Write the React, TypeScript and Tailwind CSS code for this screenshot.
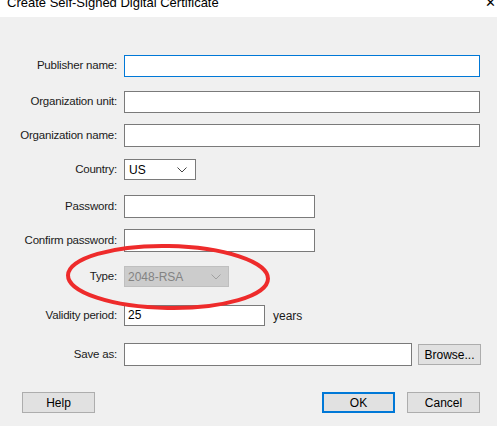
import React from "react";

const font = { fontFamily: '"Liberation Sans", Arial, sans-serif' };

function Chevron({ color }: { color: string }) {
  return (
    <svg width="10" height="6" viewBox="0 0 10 6" fill="none">
      <path d="M0.5 0.5 L5 5 L9.5 0.5" stroke={color} strokeWidth="1" />
    </svg>
  );
}

function Row({
  label,
  mt,
  children,
}: {
  label: string;
  mt: string;
  children: React.ReactNode;
}) {
  return (
    <div className={`flex items-center ${mt}`}>
      <div className="w-[118px] pr-[1px] text-right text-[11.5px] tracking-[-0.2px] text-[#1a1a1a]">{label}</div>
      <div className="ml-[6px] flex items-center">{children}</div>
    </div>
  );
}

export default function App() {
  return (
    <div className="relative w-[497px] h-[426px] overflow-hidden bg-[#f0f0f0]" style={font}>
      {/* title bar */}
      <div className="h-[17px] bg-white relative">
        <div className="absolute left-[7px] top-[-7px] text-[13px] text-black">
          Create Self-Signed Digital Certificate
        </div>
        <div className="absolute right-[1px] top-[-7px] text-[13px] text-black">✕</div>
      </div>

      <div>
        <Row label="Publisher name:" mt="mt-[38px]">
          <div className="w-[356px] h-[22px] bg-white border border-[#0078d7]" />
        </Row>
        <Row label="Organization unit:" mt="mt-[14px]">
          <div className="w-[356px] h-[22px] bg-white border border-[#7a7a7a]" />
        </Row>
        <Row label="Organization name:" mt="mt-[11px]">
          <div className="w-[356px] h-[23px] bg-white border border-[#7a7a7a]" />
        </Row>
        <Row label="Country:" mt="mt-[12px]">
          <div className="w-[72px] h-[21px] bg-white border border-[#7a7a7a] flex items-center justify-between pl-[4px] pr-[8px] text-[12px] text-black">
            <span>US</span>
            <Chevron color="#444" />
          </div>
        </Row>
        <Row label="Password:" mt="mt-[15px]">
          <div className="w-[191px] h-[23px] bg-white border border-[#7a7a7a]" />
        </Row>
        <Row label="Confirm password:" mt="mt-[11px]">
          <div className="w-[191px] h-[23px] bg-white border border-[#7a7a7a]" />
        </Row>
        <Row label="Type:" mt="mt-[14px]">
          <div className="w-[105px] h-[21px] bg-[#cccccc] border border-[#bfbfbf] flex items-center justify-between pl-[3px] pr-[7px] text-[12px] text-[#838383]">
            <span>2048-RSA</span>
            <Chevron color="#a0a0a0" />
          </div>
        </Row>
        <Row label="Validity period:" mt="mt-[18px]">
          <div className="w-[141px] h-[21px] bg-white border border-[#7a7a7a] pl-[3px] text-[12px] text-black leading-[19px]">
            25
          </div>
          <span className="ml-[8px] text-[12px] text-[#1a1a1a]">years</span>
        </Row>
        <Row label="Save as:" mt="mt-[17px]">
          <div className="w-[288px] h-[23px] bg-white border border-[#7a7a7a]" />
          <button className="ml-[6px] w-[63px] h-[21px] bg-[#e1e1e1] border border-[#adadad] text-[12px] text-black">
            Browse...
          </button>
        </Row>

        <div className="flex mt-[26px] pl-[22px]">
          <button className="w-[73px] h-[21px] bg-[#e1e1e1] border border-[#adadad] text-[12px] text-black">
            Help
          </button>
          <button className="ml-[227px] w-[73px] h-[21px] bg-[#e1e1e1] border-2 border-[#0078d7] text-[12px] text-black">
            OK
          </button>
          <button className="ml-[12px] w-[73px] h-[21px] bg-[#e1e1e1] border border-[#adadad] text-[12px] text-black">
            Cancel
          </button>
        </div>
      </div>

      {/* red annotation ellipse */}
      <svg className="absolute left-0 top-0 pointer-events-none" width="497" height="426">
        <ellipse cx="168" cy="277" rx="100" ry="31" fill="none" stroke="#ee2b2b" strokeWidth="4" transform="rotate(1 168 277)" />
      </svg>
    </div>
  );
}
